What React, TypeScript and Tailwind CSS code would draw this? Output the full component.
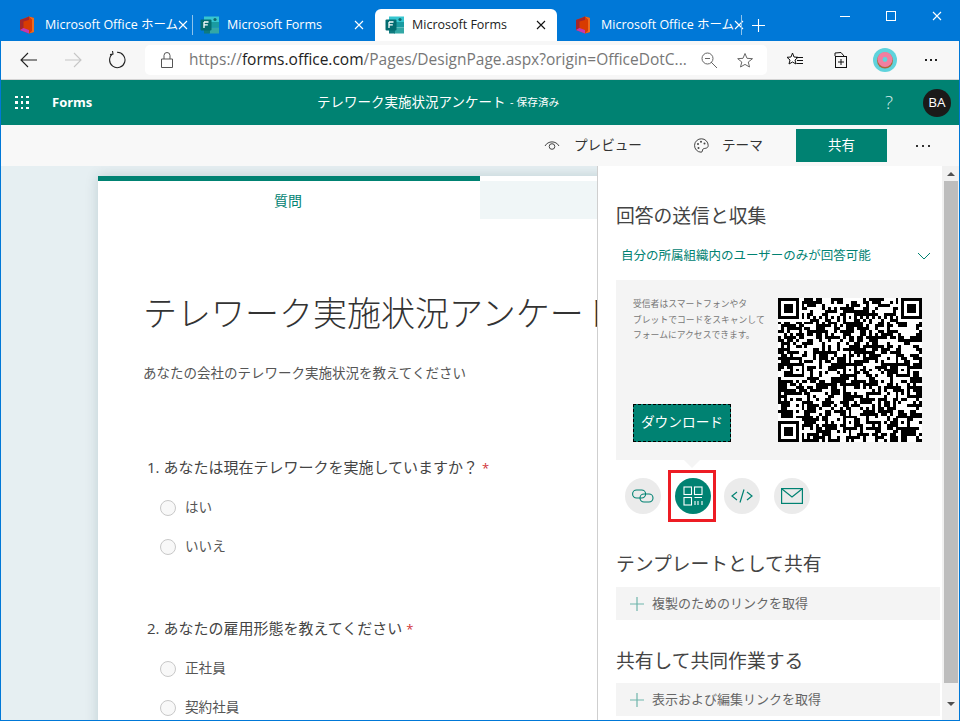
import * as React from 'react'

const font = "[font-family:'Open_Sans','Noto_Sans_CJK_JP',sans-serif]"

function OfficeLogo() {
  return (
    <svg width="16" height="18" viewBox="0 0 16 18" className="shrink-0">
      <path d="M1 4 L10 0.5 L15 2 V16 L10 17.5 L1 14 Z" fill="#d83b01" />
      <path d="M10 0.5 L15 2 V16 L10 17.5 L13 15 V3.5 Z" fill="#eb6c1f" />
      <path d="M1 4 L7 2 L10 0.5 V4 L4.5 5.5 V12 L1 14 Z" fill="#a4262c" />
      <path d="M1 14 L4.5 12 L10 14 V17.5 Z" fill="#c239b3" />
      <path d="M4.5 5.5 L10 4 V14 L4.5 12 Z" fill="#0078d7" fillOpacity="0" />
    </svg>
  )
}

function FormsLogo() {
  return (
    <svg width="20" height="18" viewBox="0 0 20 18" className="shrink-0">
      <rect x="4" y="0.5" width="15" height="5.5" fill="#37c6d0" />
      <rect x="9" y="6" width="10" height="5.5" fill="#1a9ba1" />
      <rect x="9" y="11.5" width="10" height="6" fill="#33a8a6" />
      <rect x="4" y="12" width="6" height="5.5" fill="#0f7b7f" />
      <rect x="0.5" y="3.5" width="11" height="11" rx="1" fill="#036c70" />
      <path d="M4 6 H8.5 M4 6 V12 M4 8.8 H7.8" stroke="#fff" strokeWidth="1.3" fill="none" />
      <circle cx="15" cy="3.5" r="1.6" fill="#0f6a70" />
    </svg>
  )
}

function CloseX({ color = 'white', size = 10 }: { color?: string; size?: number }) {
  return (
    <svg width={size} height={size} viewBox="0 0 10 10" className="shrink-0">
      <path d="M1 1 L9 9 M9 1 L1 9" stroke={color} strokeWidth="1.1" />
    </svg>
  )
}

function BrowserTab({ title, forms, active, width }: { title: string; forms?: boolean; active?: boolean; width: string }) {
  return (
    <div className={`${width} h-8 flex items-center shrink-0 ${active ? 'bg-white rounded-t-[6px] text-[#222] pl-[3px]' : 'text-white'}`}>
      <div className={`flex items-center justify-center ${forms ? 'w-[20px] ml-[7px]' : 'w-[16px] ml-[18px]'}`}>
        {forms ? <FormsLogo /> : <OfficeLogo />}
      </div>
      <span className={`text-[12.5px] whitespace-nowrap flex-1 ${forms ? 'ml-[7px]' : 'ml-[10px]'}`}>{title}</span>
      <div className="mr-[11px]">
        <CloseX color={active ? '#111' : 'white'} />
      </div>
    </div>
  )
}

function TabStrip() {
  return (
    <div className="h-[40px] bg-[#0078d7] flex items-end shrink-0">
      <BrowserTab title="Microsoft Office ホーム" width="w-[191px]" />
      <div className="w-px h-5 bg-[#8fc3ec] mb-1.5" />
      <BrowserTab title="Microsoft Forms" forms width="w-[182px]" />
      <BrowserTab title="Microsoft Forms" forms active width="w-[182px]" />
      <BrowserTab title="Microsoft Office ホーム" width="w-[184px]" />
      <div className="w-px h-5 bg-[#8fc3ec] mb-1.5" />
      <div className="w-8 h-8 flex items-center justify-center">
        <svg width="13" height="13" viewBox="0 0 13 13">
          <path d="M6.5 0 V13 M0 6.5 H13" stroke="white" strokeWidth="1.1" />
        </svg>
      </div>
      <div className="flex-1" />
      <div className="self-start flex items-center text-white h-[30px]">
        <div className="w-[46px] flex justify-center">
          <div className="w-[10px] h-px bg-white" />
        </div>
        <div className="w-[46px] flex justify-center">
          <div className="w-[10px] h-[10px] border border-white" />
        </div>
        <div className="w-[46px] flex justify-center mr-[-1px]">
          <CloseX />
        </div>
      </div>
    </div>
  )
}

function Toolbar() {
  return (
    <div className="h-[39px] bg-[#f7f7f7] border-b border-[#d4d4d4] flex items-center shrink-0">
      <div className="w-[56px] flex justify-center">
        <svg width="18" height="16" viewBox="0 0 18 16"><path d="M17 8 H1 M8 1 L1 8 L8 15" stroke="#222" strokeWidth="1.1" fill="none" /></svg>
      </div>
      <div className="w-[32px] flex justify-center">
        <svg width="18" height="16" viewBox="0 0 18 16"><path d="M1 8 H17 M10 1 L17 8 L10 15" stroke="#c6c6c6" strokeWidth="1.1" fill="none" /></svg>
      </div>
      <div className="w-[56px] flex justify-center">
        <svg width="18" height="18" viewBox="0 0 18 18"><path d="M5 2.6 A7.7 7.7 0 1 0 9 1.3 M4.5 0 L5 3 L2 3.6" stroke="#222" strokeWidth="1.1" fill="none" /></svg>
      </div>
      <div className="w-[622px] h-[30px] bg-white rounded-[5px] flex items-center">
        <div className="w-[44px] flex justify-center">
          <svg width="12" height="16" viewBox="0 0 12 16"><path d="M0.5 7 H11.5 V15.5 H0.5 Z M3 7 V3.5 A3 3 0 0 1 9 3.5 V7" stroke="#555" fill="none" /></svg>
        </div>
        <div className="text-[15.5px] whitespace-nowrap text-[#777] w-[500px]">
          https://<span className="text-[#222]">forms.office.com</span>/Pages/DesignPage.aspx?origin=OfficeDotC...
        </div>
        <svg width="17" height="17" viewBox="0 0 17 17" className="ml-[12px]"><path d="M4 6.5 H9 M10 10 L16 16" stroke="#666" fill="none" /><circle cx="6.5" cy="6.5" r="5.5" stroke="#666" fill="none" /></svg>
        <svg width="17" height="17" viewBox="0 0 17 17" className="ml-[19px]"><path d="M8 1.5 L10 6.3 L15.5 6.7 L11.3 10 L12.5 15 L8 12.4 L3.5 15 L4.8 10 L0.7 6.7 L6 6.3 Z" stroke="#666" fill="none" /></svg>
      </div>
      <div className="w-[56px] flex justify-center ml-[0px]">
        <svg width="18" height="16" viewBox="0 0 18 16"><path d="M6.5 1 L8 5 L12 5.3 L9 8 L10 12 L6.5 10 L3 12 L4 8 L1 5.3 L5 5 Z" stroke="#111" fill="#fff" /><path d="M10 5.5 H17 M11 8.5 H17 M10.5 11.5 H17" stroke="#111" /></svg>
      </div>
      <div className="w-[34px] flex justify-center">
        <svg width="16" height="16" viewBox="0 0 16 16"><path d="M3 4 V1 L9 0.5 L12 4" stroke="#111" fill="none" /><rect x="3.5" y="4.5" width="11" height="11" stroke="#111" fill="none" /><path d="M9 7 V13 M6 10 H12" stroke="#111" /></svg>
      </div>
      <div className="w-[56px] flex justify-center">
        <svg width="24" height="24" viewBox="0 0 24 24">
          <circle cx="12" cy="12" r="12" fill="#5fd3dc" />
          <circle cx="12" cy="12.5" r="8" fill="#a9693a" />
          <circle cx="12" cy="11.5" r="7.5" fill="#f27ea0" />
          <circle cx="12" cy="11.5" r="2.4" fill="#5fd3dc" />
        </svg>
      </div>
      <div className="w-[36px] flex justify-center gap-[3px]">
        <div className="w-[2px] h-[2px] bg-[#222]" />
        <div className="w-[2px] h-[2px] bg-[#222]" />
        <div className="w-[2px] h-[2px] bg-[#222]" />
      </div>
    </div>
  )
}

function FormsHeader() {
  return (
    <div className="h-[45px] bg-[#008272] text-white flex items-center shrink-0">
      <div className="ml-[14px] grid grid-cols-3 gap-[3px] w-[14px]">
        {Array.from({ length: 9 }).map((_, i) => (
          <div key={i} className="w-[2.5px] h-[2.5px] bg-white" />
        ))}
      </div>
      <span className="ml-[23px] text-[13px] font-bold w-[265px]">Forms</span>
      <span className="text-[13.5px] whitespace-nowrap w-[190px]">テレワーク実施状況アンケート</span>
      <span className="text-[11px] whitespace-nowrap ml-[3px]">- </span>
      <span className="text-[10.7px] whitespace-nowrap ml-[3px]">保存済み</span>
      <div className="flex-1" />
      <span className="text-[19px] font-light mr-[30px] text-[#d5ebe8]">?</span>
      <div className="w-[28px] h-[28px] rounded-full bg-[#1b1a19] flex items-center justify-center text-[13.5px] mr-[8px]">BA</div>
    </div>
  )
}

function CommandBar() {
  return (
    <div className="h-[41px] bg-[#f8f8f8] flex items-center shrink-0 text-[#333] text-[13.6px]">
      <div className="flex-1" />
      <svg width="16" height="11" viewBox="0 0 16 11" className="mr-[14px]"><path d="M1 6 C4 0.5 12 0.5 15 6" stroke="#444" fill="none" /><circle cx="8" cy="6.5" r="2.8" stroke="#444" fill="none" /></svg>
      <span className="whitespace-nowrap w-[68px]">プレビュー</span>
      <svg width="15" height="15" viewBox="0 0 15 15" className="ml-[52px] mr-[13px]"><path d="M7.5 0.8 A6.7 6.7 0 1 0 7 14.2 C9 14.2 8 12 9 11 C10 10 14.2 11 14.2 7.5 A6.7 6.7 0 0 0 7.5 0.8 Z" stroke="#444" fill="none" /><circle cx="4" cy="6" r="1" fill="#444" /><circle cx="7" cy="3.8" r="1" fill="#444" /><circle cx="10.5" cy="5.5" r="1" fill="#444" /><circle cx="4.5" cy="10" r="1" fill="#444" /></svg>
      <span className="whitespace-nowrap w-[41px]">テーマ</span>
      <button className="ml-[33px] w-[91px] h-[33px] bg-[#008272] text-white text-[13.5px]">共有</button>
      <div className="w-[72px] flex justify-center gap-[4px] pr-[-1px]">
        <div className="w-[2px] h-[2px] bg-[#333]" />
        <div className="w-[2px] h-[2px] bg-[#333]" />
        <div className="w-[2px] h-[2px] bg-[#333]" />
      </div>
    </div>
  )
}

function Option({ label }: { label: string }) {
  return (
    <div className="flex items-center h-[39px] pl-[62px] text-[13.6px] text-[#555]">
      <div className="w-4 h-4 rounded-full border border-[#c8c8c8] bg-[#f8f8f8] mr-[9px]" />
      {label}
    </div>
  )
}

function FormPane() {
  return (
    <div className="flex-1 min-w-0 bg-[#e6eff2] overflow-hidden pt-[10px] pl-[97px]">
      <div className="w-[600px] bg-white shadow-[0_0_12px_rgba(0,60,70,0.18)] h-[600px]">
        <div className="h-[5px] w-[382px] bg-[#008272]" />
        <div className="flex h-[38px]">
          <div className="w-[382px] flex items-center justify-center text-[#008272] text-[14px] pr-[2px] bg-white">質問</div>
          <div className="flex-1 bg-[#f0f6f7]" />
        </div>
        <div className="pt-[71px] pl-[45px] text-[#333] text-[34px] leading-[46px] whitespace-nowrap font-light">
          テレワーク実施状況アンケート
        </div>
        <div className="pl-[45px] mt-[27px] text-[13.5px] leading-5 text-[#555]">あなたの会社のテレワーク実施状況を教えてください</div>
        <div className="pl-[49px] mt-[74px] text-[15px] leading-5 text-[#444]">
          1. あなたは現在テレワークを実施していますか？ <span className="text-[#d13438] text-[13px]">*</span>
        </div>
        <div className="mt-[10px]">
          <Option label="はい" />
          <Option label="いいえ" />
        </div>
        <div className="pl-[49px] mt-[52px] text-[15px] leading-5 text-[#444]">
          2. あなたの雇用形態を教えてください <span className="text-[#d13438] text-[13px]">*</span>
        </div>
        <div className="mt-[10px]">
          <Option label="正社員" />
          <Option label="契約社員" />
        </div>
      </div>
    </div>
  )
}

function QrCode() {
  const n = 49
  const rects = React.useMemo(() => {
    const grid: boolean[][] = []
    let seed = 20240611
    for (let y = 0; y < n; y++) {
      grid.push([])
      for (let x = 0; x < n; x++) {
        seed = (seed * 1664525 + 1013904223) >>> 0
        // keep runs of dark modules like a real code
        const prev = x > 0 ? grid[y][x - 1] : false
        const up = y > 0 ? grid[y - 1][x] : false
        const bias = (prev ? 0.12 : 0) + (up ? 0.12 : 0)
        grid[y][x] = seed / 4294967296 < 0.4 + bias
      }
    }
    const stamp = (cx: number, cy: number, r: number, rings: boolean[]) => {
      for (let y = -r; y <= r; y++) {
        for (let x = -r; x <= r; x++) {
          const px = cx + x
          const py = cy + y
          if (px < 0 || py < 0 || px >= n || py >= n) continue
          grid[py][px] = rings[Math.max(Math.abs(x), Math.abs(y))]
        }
      }
    }
    for (let i = 0; i < n; i++) {
      grid[6][i] = i % 2 === 0
      grid[i][6] = i % 2 === 0
    }
    const finder = [true, true, true, false, true, false]
    stamp(3, 3, 4, [true, true, true, true, false])
    stamp(45, 3, 4, [true, true, true, true, false])
    stamp(3, 45, 4, [true, true, true, true, false])
    void finder
    const align = [true, false, true]
    const centers = [[6, 24], [24, 6], [24, 24], [42, 24], [24, 42], [42, 42]]
    centers.forEach(([x, y]) => stamp(x, y, 2, align))
    // inner finder ring is white
    const ring = (cx: number, cy: number) => {
      for (let y = -2; y <= 2; y++) {
        for (let x = -2; x <= 2; x++) {
          if (Math.max(Math.abs(x), Math.abs(y)) === 2) grid[cy + y][cx + x] = false
        }
      }
    }
    ring(3, 3)
    ring(45, 3)
    ring(3, 45)
    const out: React.ReactElement[] = []
    grid.forEach((row, y) =>
      row.forEach((on, x) => {
        if (on) out.push(<rect key={`${x}-${y}`} x={x} y={y} width="1" height="1" />)
      })
    )
    return out
  }, [])
  return (
    <svg width="144" height="144" viewBox="0 0 49 49" shapeRendering="crispEdges" className="bg-white shrink-0">
      {rects}
    </svg>
  )
}

function ShareIcon({ active, children }: { active?: boolean; children: React.ReactNode }) {
  return (
    <div className={`w-9 h-9 rounded-full flex items-center justify-center ${active ? 'bg-[#008272]' : 'bg-[#ebebeb]'}`}>
      {children}
    </div>
  )
}

function LinkRow({ label }: { label: string }) {
  return (
    <div className="h-[33px] bg-[#f4f4f4] flex items-center pl-[14px] text-[13px] text-[#666] shrink-0">
      <svg width="14" height="14" viewBox="0 0 14 14" className="mr-[8px]"><path d="M7 0 V14 M0 7 H14" stroke="#6fb5ab" strokeWidth="1.2" /></svg>
      {label}
    </div>
  )
}

function SharePanel() {
  return (
    <div className="w-[345px] shrink-0 bg-white border-l border-[#cfcfcf] pl-[18px] overflow-hidden flex flex-col h-[554px]">
      <div className="text-[18.8px] leading-6 text-[#444] mt-[38px] whitespace-nowrap">回答の送信と収集</div>
      <div className="flex items-center mt-[18px] pl-[5px] h-5 text-[12.5px] text-[#008272] whitespace-nowrap">
        <span className="w-[296px]">自分の所属組織内のユーザーのみが回答可能</span>
        <svg width="14" height="8" viewBox="0 0 14 8"><path d="M1 1 L7 7 L13 1" stroke="#008272" fill="none" /></svg>
      </div>
      <div className="relative w-[324px] h-[180px] bg-[#f4f4f4] mt-[14px] flex shrink-0 pl-[17px] pt-[17px]">
        <div className="w-[145px] flex flex-col">
          <p className="text-[8.8px] leading-[15.5px] text-[#777] whitespace-nowrap">
            受信者はスマートフォンやタ<br />ブレットでコードをスキャンして<br />フォームにアクセスできます。
          </p>
          <button className="mt-[60px] w-[98px] h-[38px] bg-[#008272] border border-dashed border-black text-white text-[13.7px] whitespace-nowrap">
            ダウンロード
          </button>
        </div>
        <div className="pt-px">
          <QrCode />
        </div>
        <div className="absolute left-[68px] top-[180px] w-0 h-0 border-x-[8px] border-x-transparent border-t-[8px] border-t-[#f4f4f4]" />
      </div>
      <div className="relative flex gap-[13.5px] pl-[9px] mt-[18px] shrink-0">
        <ShareIcon>
          <svg width="22" height="14" viewBox="0 0 22 14" fill="none" stroke="#008272" strokeWidth="1.1">
            <rect x="0.6" y="1" width="13" height="8" rx="4" />
            <rect x="8" y="5" width="13" height="8" rx="4" />
          </svg>
        </ShareIcon>
        <ShareIcon active>
          <svg width="20" height="20" viewBox="0 0 20 20" fill="none" stroke="white" strokeWidth="1.1">
            <rect x="1" y="1" width="7.5" height="7.5" />
            <rect x="11.5" y="1" width="7.5" height="7.5" />
            <rect x="1" y="11.5" width="7.5" height="7.5" />
            <path d="M11.5 11.5 H19 M12 15 V19 M15 15 V19 M19 15 V19" />
          </svg>
        </ShareIcon>
        <ShareIcon>
          <svg width="22" height="14" viewBox="0 0 22 14" fill="none" stroke="#008272" strokeWidth="1.2">
            <path d="M6 3 L1 7 L6 11 M16 3 L21 7 L16 11 M13 0.5 L9 13.5" />
          </svg>
        </ShareIcon>
        <ShareIcon>
          <svg width="22" height="16" viewBox="0 0 22 16" fill="none" stroke="#008272" strokeWidth="1.2">
            <rect x="0.6" y="0.6" width="20.8" height="14.8" />
            <path d="M1 1 L11 9 L21 1" />
          </svg>
        </ShareIcon>
        <div className="absolute left-[52px] top-[-8px] w-[48px] h-[52px] border-[3px] border-[#ed1c24]" />
      </div>
      <div className="text-[18.8px] leading-6 text-[#444] mt-[38px] whitespace-nowrap">テンプレートとして共有</div>
      <div className="mt-[11px] w-[324px]"><LinkRow label="複製のためのリンクを取得" /></div>
      <div className="text-[18.8px] leading-6 text-[#444] mt-[29px] whitespace-nowrap">共有して共同作業する</div>
      <div className="mt-[10px] w-[324px]"><LinkRow label="表示および編集リンクを取得" /></div>
    </div>
  )
}

function Scrollbar() {
  return (
    <div className="w-[17px] shrink-0 bg-[#f1f1f1] flex flex-col items-center h-[554px]">
      <div className="h-[15px] flex items-center justify-center">
        <div className="w-0 h-0 border-x-[4px] border-x-transparent border-b-[4px] border-b-[#505050]" />
      </div>
      <div className="w-[14px] h-[502px] bg-[#bdbdbd]" />
      <div className="flex-1" />
      <div className="h-[33px] flex items-center justify-center">
        <div className="w-0 h-0 border-x-[4px] border-x-transparent border-t-[4px] border-t-[#505050]" />
      </div>
    </div>
  )
}

export default function App() {
  return (
    <div className={`w-[960px] h-[721px] border border-[#0078d7] flex flex-col overflow-hidden ${font}`}>
      <TabStrip />
      <Toolbar />
      <FormsHeader />
      <CommandBar />
      <div className="flex flex-1 min-h-0">
        <FormPane />
        <SharePanel />
        <Scrollbar />
      </div>
    </div>
  )
}
